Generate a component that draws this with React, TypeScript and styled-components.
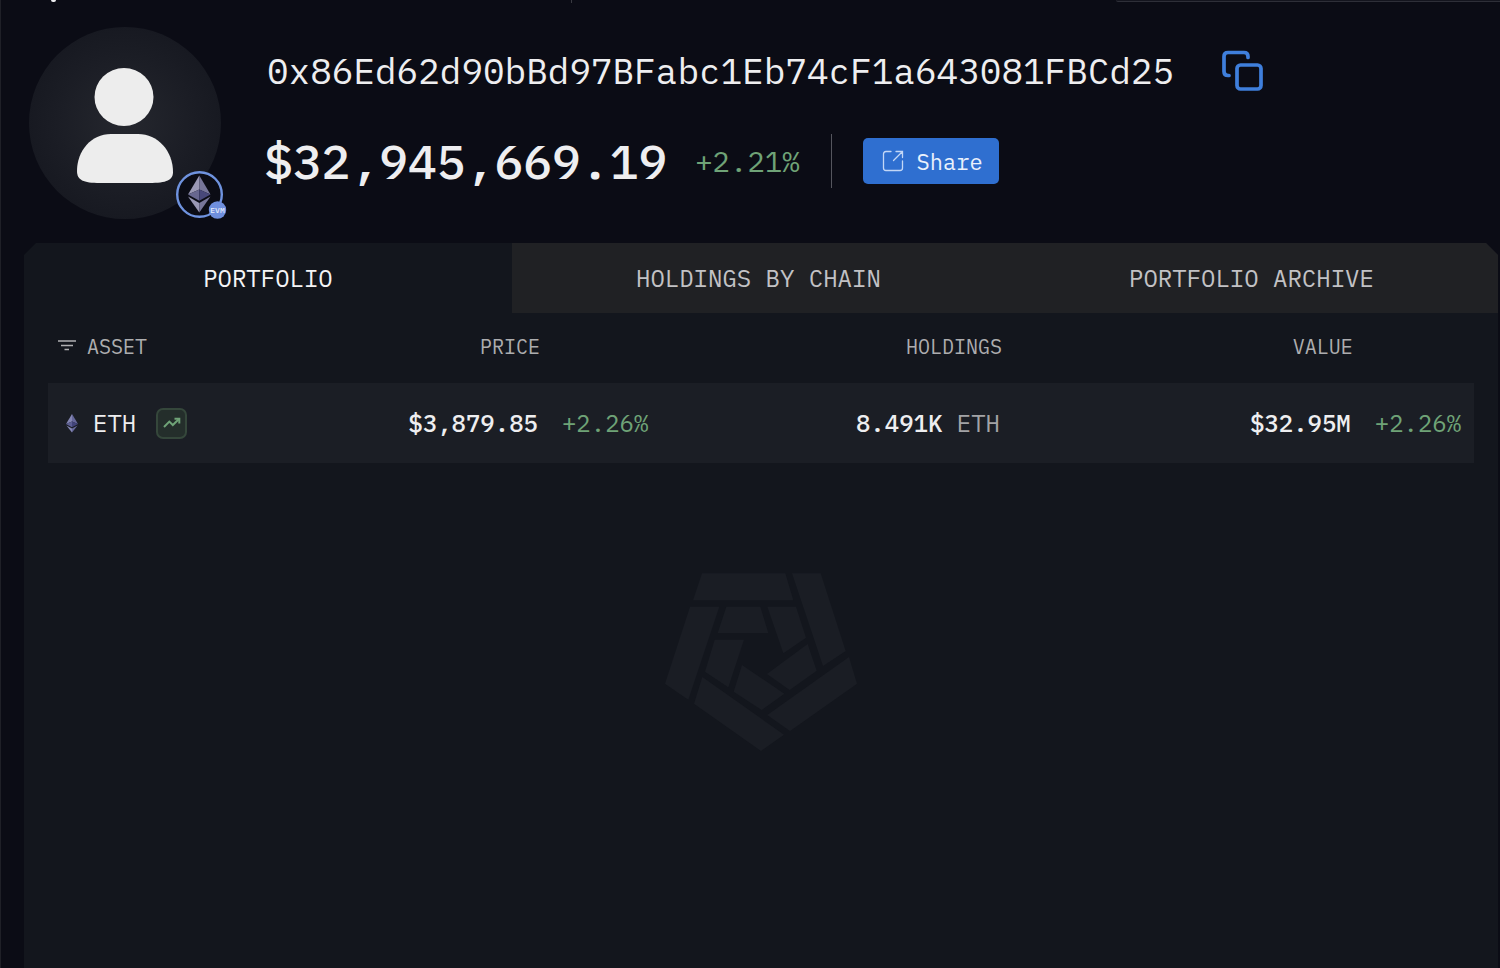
import React from "react";
import styled, { createGlobalStyle, css } from "styled-components";

const GlobalStyle = createGlobalStyle`
  *, *::before, *::after { box-sizing: border-box; }
  body {
    margin: 0;
    background: #0b0c15;
    color: #eeeef0;
    font-family: "IBM Plex Mono", "Liberation Mono", monospace;
    font-weight: 400;
  }
`;

const Page = styled.div`
  min-height: 100vh;
  display: flex;
  flex-direction: column;
  border-left: 1px solid #1f2027;
`;

const TopBar = styled.div`
  height: 3px;
  display: flex;
  overflow: hidden;
`;

const BrandTip = styled.span`
  width: 5px;
  height: 2px;
  margin-left: 50px;
  border-radius: 0 0 4px 4px;
  background: #eeeef0;
`;

const TopRule = styled.span`
  width: 1px;
  height: 3px;
  margin-left: 515px;
  background: #3a3b42;
`;

const SearchEdge = styled.span`
  width: 25.6%;
  height: 2px;
  margin-left: auto;
  border-bottom: 1px solid #2e2f38;
  border-bottom-left-radius: 6px;
  background: #14151e;
`;

const Header = styled.header`
  display: flex;
  align-items: flex-start;
  gap: 43px;
  padding: 24px 28px 24px;
`;

const Avatar = styled.div`
  position: relative;
  flex: none;
  width: 192px;
  height: 192px;
  border-radius: 50%;
  background: radial-gradient(circle, #25272e 0%, #1b1d25 50%, #12141c 100%);
`;

const ChainBadge = styled.svg`
  position: absolute;
  right: -6px;
  bottom: 0;
`;

const Details = styled.div`
  display: flex;
  flex-direction: column;
  gap: 39px;
  padding-top: 20px;
`;

const AddressRow = styled.div`
  display: flex;
  align-items: center;
  gap: 48px;
  height: 48px;
  padding-left: 3px;
`;

const Address = styled.h1`
  margin: 0;
  font-size: 36px;
  line-height: 48px;
  font-weight: inherit;
`;

const IconButton = styled.button`
  display: flex;
  padding: 0;
  border: 0;
  background: none;
  color: #3f7fdc;
  cursor: pointer;
`;

const BalanceRow = styled.div`
  display: flex;
  align-items: center;
  height: 54px;
`;

const Balance = styled.span`
  font-size: 48px;
  line-height: 54px;
  font-weight: 500;
`;

const BalanceChange = styled.span`
  margin-left: 28px;
  padding-right: 31px;
  font-size: 29px;
  line-height: 54px;
  color: #6fa377;
  border-right: 1px solid #55565e;
`;

const ShareButton = styled.button`
  display: flex;
  align-items: center;
  gap: 13px;
  height: 46px;
  margin-left: 31px;
  padding: 0 16px 0 19px;
  border: 0;
  border-radius: 5px;
  background: #2f6fd0;
  color: #eaf1fc;
  font: inherit;
  font-size: 22px;
  cursor: pointer;
`;

const Panel = styled.main`
  flex: 1;
  margin: 0 2px 0 23px;
  background: #13161d;
  clip-path: polygon(0 12px, 12px 0, calc(100% - 12px) 0, 100% 12px, 100% 100%, 0 100%);
`;

const Tabs = styled.div`
  display: grid;
  grid-template-columns: 33.1% 1fr 1fr;
`;

const Tab = styled.button<{ $active?: boolean }>`
  height: 70px;
  padding: 0;
  border: 0;
  font: inherit;
  font-size: 24px;
  text-transform: uppercase;
  cursor: pointer;
  ${({ $active }) =>
    $active
      ? css`background: transparent; color: #f4f4f6;`
      : css`background: #202124; color: #c2c2c5;`}
`;

const TableWrap = styled.div`
  padding: 0 24px;
`;

const Table = styled.table`
  width: 100%;
  table-layout: fixed;
  border-collapse: collapse;
`;

const Col = styled.col<{ $share: number }>`
  width: ${({ $share }) => $share}%;
`;

const HeadCell = styled.th<{ $left?: boolean }>`
  height: 70px;
  padding: 0 0 4px ${({ $left }) => ($left ? 10 : 0)}px;
  font-size: 20px;
  font-weight: inherit;
  text-align: ${({ $left }) => ($left ? "left" : "right")};
  color: #adadaf;
`;

const HeadLabel = styled.span`
  display: flex;
  align-items: center;
  gap: 11px;
`;

const Row = styled.tr`
  background: #1b1e25;
`;

const Cell = styled.td<{ $left?: boolean }>`
  height: 80px;
  padding: 0 2px 0 ${({ $left }) => ($left ? 17 : 0)}px;
  font-size: 24px;
  font-weight: 500;
  white-space: nowrap;
  text-align: ${({ $left }) => ($left ? "left" : "right")};
  color: #eeeef0;
`;

const ChangeCell = styled(Cell)`
  padding-left: 22px;
  font-weight: 400;
  text-align: left;
  color: #6fa377;
`;

const AssetName = styled.span`
  display: flex;
  align-items: center;
  gap: 14px;
  font-weight: 400;
`;

const TrendButton = styled.button`
  display: flex;
  align-items: center;
  justify-content: center;
  width: 31px;
  height: 31px;
  margin-left: 6px;
  padding: 0 0 1px;
  border: 2px solid #35473b;
  border-radius: 7px;
  background: #242e2b;
  color: #6fa377;
  cursor: pointer;
`;

const Unit = styled.span`
  font-weight: 400;
  color: #a3a3a6;
`;

const Watermark = styled.svg`
  display: block;
  margin: 110px auto 0;
`;

const PersonGlyph = () => (
  <svg width="192" height="192" viewBox="0 0 192 192" fill="#ededed" aria-hidden="true">
    <ellipse cx="95" cy="70" rx="29.5" ry="29" />
    <path d="M48 144C48 124 62 107 82 107H109C129 107 144 124 144 145C144 153 138 156 120 156H71C54 156 48 153 48 144Z" />
  </svg>
);

const EvmBadge = () => (
  <ChainBadge width="52" height="50" viewBox="0 0 52 50" role="img" aria-label="EVM chains">
    <circle cx="24.5" cy="25.5" r="22.3" fill="#0b0c15" stroke="#6f93df" strokeWidth="2.4" />
    <path d="M24.3 6.5L13 25.5L24.3 20.5Z" fill="#9a98b4" />
    <path d="M24.3 6.5L35.5 25.5L24.3 20.5Z" fill="#77769a" />
    <path d="M13 25.5L24.3 20.5V31.8Z" fill="#68678f" />
    <path d="M35.5 25.5L24.3 20.5V31.8Z" fill="#48487a" />
    <path d="M13 27.6L24.3 34V43.5Z" fill="#9a98b4" />
    <path d="M35.5 27.6L24.3 34V43.5Z" fill="#77769a" />
    <circle cx="42.5" cy="41" r="8.7" fill="#6f8fdd" />
    <text x="42.5" y="43.8" fontSize="8" fontWeight="500" textAnchor="middle" fill="#e4ebfa">
      EVM
    </text>
  </ChainBadge>
);

const CopyGlyph = () => (
  <svg width="42" height="42" viewBox="0 0 42 42" fill="none" stroke="currentColor" strokeWidth="3.7" strokeLinecap="round" aria-hidden="true">
    <path d="M26 7.5V6.5Q26 2.5 22 2.5H6Q2 2.5 2 6.5V21.5Q2 25.5 6 25.5H7" />
    <rect x="15" y="15" width="24" height="24" rx="3.5" />
  </svg>
);

const ShareGlyph = () => (
  <svg width="22" height="22" viewBox="0 0 22 22" fill="none" stroke="#c3d7f6" strokeWidth="1.3" strokeLinecap="round" aria-hidden="true">
    <path d="M9 1.5H4Q1.5 1.5 1.5 4V18Q1.5 20.5 4 20.5H18Q20.5 20.5 20.5 18V11" />
    <path d="M14 1.5H20.5V7.5M20 2L11.5 10.5" />
  </svg>
);

const FilterGlyph = () => (
  <svg width="18" height="14" viewBox="0 0 18 14" fill="none" stroke="#b0b0b2" strokeWidth="1.7" aria-hidden="true">
    <path d="M0 2H18M3 6.5H15M6.5 10.5H11" />
  </svg>
);

const TrendGlyph = () => (
  <svg width="18" height="12" viewBox="0 0 18 12" fill="none" stroke="currentColor" strokeWidth="2" aria-hidden="true">
    <path d="M1 10L6.3 4.6L9.8 8L16 2" />
    <path d="M11.5 1.8H16.3V6.5" />
  </svg>
);

const EthGlyph = () => (
  <svg width="14" height="20" viewBox="0 0 14 20" aria-hidden="true">
    <path d="M7 1L1 11L7 8.5Z" fill="#8486b3" />
    <path d="M7 1L13 11L7 8.5Z" fill="#66689b" />
    <path d="M1 11L7 8.5V14.2Z" fill="#5c5e93" />
    <path d="M13 11L7 8.5V14.2Z" fill="#42447a" />
    <path d="M1.4 12.6L7 15.6V19.5Z" fill="#8486b3" />
    <path d="M12.6 12.6L7 15.6V19.5Z" fill="#66689b" />
  </svg>
);

const BrandWatermark = () => (
  <Watermark width="192" height="178" viewBox="45 38 576 534" fill="#1a1d24" aria-hidden="true">
    <path d="M156 39H406L430 120H129Z" />
    <path d="M426 39H512L587 272L519 317Z" />
    <path d="M120 139H208L115 418L45 370Z" />
    <path d="M229 139H331L355 218H203Z" />
    <path d="M352 139H438L468 232L400 279Z" />
    <path d="M194 238H282L235 381L165 334Z" />
    <path d="M473 251L500 331L419 389L351 341Z" />
    <path d="M276 314L403 400L335 449L251 394Z" />
    <path d="M597 290L621 370L420 512L352 464Z" />
    <path d="M157 350L402 523L333 572L132 430Z" />
  </Watermark>
);

export default function App() {
  return (
    <>
      <GlobalStyle />
      <Page>
        <TopBar aria-hidden="true">
          <BrandTip />
          <TopRule />
          <SearchEdge />
        </TopBar>
        <Header>
          <Avatar>
            <PersonGlyph />
            <EvmBadge />
          </Avatar>
          <Details>
            <AddressRow>
              <Address>0x86Ed62d90bBd97BFabc1Eb74cF1a643081FBCd25</Address>
              <IconButton type="button" aria-label="Copy address">
                <CopyGlyph />
              </IconButton>
            </AddressRow>
            <BalanceRow>
              <Balance>$32,945,669.19</Balance>
              <BalanceChange>+2.21%</BalanceChange>
              <ShareButton type="button">
                <ShareGlyph />
                Share
              </ShareButton>
            </BalanceRow>
          </Details>
        </Header>
        <Panel>
          <Tabs role="tablist">
            <Tab $active type="button" role="tab" aria-selected="true">Portfolio</Tab>
            <Tab type="button" role="tab" aria-selected="false">Holdings by chain</Tab>
            <Tab type="button" role="tab" aria-selected="false">Portfolio archive</Tab>
          </Tabs>
          <TableWrap>
            <Table>
              <colgroup>
                <Col $share={14} />
                <Col $share={20.5} />
                <Col $share={8} />
                <Col $share={24.4} />
                <Col $share={24.6} />
                <Col $share={8.5} />
              </colgroup>
              <thead>
                <tr>
                  <HeadCell $left scope="col">
                    <HeadLabel>
                      <FilterGlyph />
                      ASSET
                    </HeadLabel>
                  </HeadCell>
                  <HeadCell scope="col">PRICE</HeadCell>
                  <HeadCell as="td" />
                  <HeadCell scope="col">HOLDINGS</HeadCell>
                  <HeadCell scope="col">VALUE</HeadCell>
                  <HeadCell as="td" />
                </tr>
              </thead>
              <tbody>
                <Row>
                  <Cell $left>
                    <AssetName>
                      <EthGlyph />
                      ETH
                      <TrendButton type="button" aria-label="ETH price chart">
                        <TrendGlyph />
                      </TrendButton>
                    </AssetName>
                  </Cell>
                  <Cell>$3,879.85</Cell>
                  <ChangeCell>+2.26%</ChangeCell>
                  <Cell>
                    8.491K <Unit>ETH</Unit>
                  </Cell>
                  <Cell>$32.95M</Cell>
                  <ChangeCell>+2.26%</ChangeCell>
                </Row>
              </tbody>
            </Table>
          </TableWrap>
          <BrandWatermark />
        </Panel>
      </Page>
    </>
  );
}
